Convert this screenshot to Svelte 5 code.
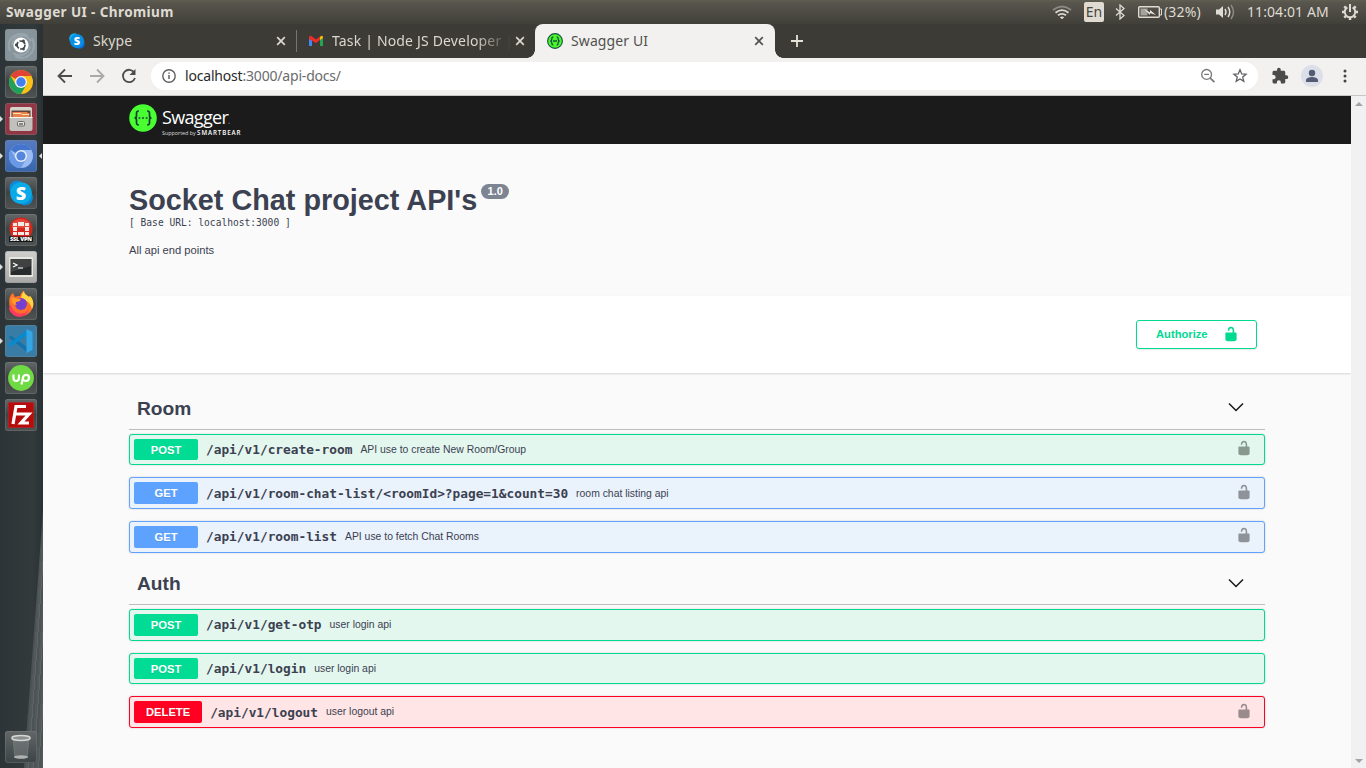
<script>
  const sections = [
    {
      name: 'Room',
      rows: [
        { method: 'POST', path: '/api/v1/create-room', text: 'API use to create New Room/Group', lock: true },
        { method: 'GET', path: '/api/v1/room-chat-list/<roomId>?page=1&count=30', text: 'room chat listing api', lock: true },
        { method: 'GET', path: '/api/v1/room-list', text: 'API use to fetch Chat Rooms', lock: true }
      ]
    },
    {
      name: 'Auth',
      rows: [
        { method: 'POST', path: '/api/v1/get-otp', text: 'user login api', lock: false },
        { method: 'POST', path: '/api/v1/login', text: 'user login api', lock: false },
        { method: 'DELETE', path: '/api/v1/logout', text: 'user logout api', lock: true }
      ]
    }
  ];
  const apps = ['dash', 'chrome', 'files', 'chromium', 'skype', 'vpn', 'terminal', 'firefox', 'code', 'upwork', 'filezilla', 'trash'];
  const running = ['files', 'chromium', 'terminal', 'code'];
</script>

{#snippet lock()}
  <svg class="lock" viewBox="0 0 20 20"><path d="M15.8 8H14V5.6C14 2.703 12.665 1 10 1 7.334 1 6 2.703 6 5.6V6h2v-.801C8 3.754 8.797 3 10 3c1.203 0 2 .754 2 2.199V8H4c-.553 0-1 .646-1 1.199V17c0 .549.428 1.139.951 1.307l1.197.387C5.672 18.861 6.55 19 7.1 19h5.8c.549 0 1.428-.139 1.951-.307l1.196-.387c.524-.167.953-.757.953-1.306V9.199C17 8.646 16.352 8 15.8 8z" /></svg>
{/snippet}

{#snippet close()}
  <svg class="close" viewBox="0 0 10 10" width="10" height="10"><path d="M1.2 1.2 8.8 8.8M8.8 1.2 1.2 8.8" fill="none" stroke="currentColor" stroke-width="1.7" /></svg>
{/snippet}

{#snippet icon(name)}
  <svg viewBox="0 0 32 32" width="32" height="32">
    {#if name === 'dash'}
      <path d="M5 22C0 9 13 1 23 7M10 27c12 6 23-5 17-18M7 16C8 6 20 3 26 12M25 17c-1 8-10 12-17 7" fill="none" stroke="#c5ced3" stroke-width="2" opacity=".3" />
      <circle cx="16" cy="16" r="7.6" fill="#fff" />
      <circle cx="16" cy="16" r="4" fill="none" stroke="#3e474c" stroke-width="1.7" stroke-dasharray="7 1.38" />
      <circle cx="11.3" cy="16" r="1.4" fill="#3e474c" /><circle cx="18.5" cy="11.9" r="1.4" fill="#3e474c" /><circle cx="18.5" cy="20.1" r="1.4" fill="#3e474c" />
    {:else if name === 'chrome'}
      <circle cx="16" cy="16" r="12" fill="#fbc116" />
      <path d="M16 16 5.6 10A12 12 0 0 1 26.4 10L16 10Z" fill="#df4436" />
      <path d="M5.6 10A12 12 0 0 0 16 28l5.2-9L16 16l-5.2 3Z" fill="#20a05a" />
      <circle cx="16" cy="16" r="6" fill="#f2f4f4" /><circle cx="16" cy="16" r="4.7" fill="#437ff0" />
    {:else if name === 'files'}
      <path d="M5 6q0-2 2-2h18q2 0 2 2v9H5Z" fill="#d6d2ca" /><path d="M6.5 7.5h19v6.5h-19Z" fill="#634239" />
      <path d="M7.5 9h15v1h2v4h-17Z" fill="#e9824a" /><path d="M8 10.5h8l1 1h7" stroke="#ffe0b6" fill="none" />
      <path d="M4.5 14h23v12q0 2-2 2h-19q-2 0-2-2Z" fill="#c1c0bc" /><path d="M4.5 14.5h23" stroke="#f6f4ef" />
      <rect x="12.5" y="18.5" width="7" height="4.5" rx="1" fill="#e2e1de" stroke="#6a6a66" /><path d="M14 21h4" stroke="#555" stroke-width="1.3" />
    {:else if name === 'chromium'}
      <circle cx="16" cy="16" r="12" fill="#9bbcf2" />
      <path d="M16 16 5.6 10A12 12 0 0 1 26.4 10L16 10Z" fill="#4375cd" />
      <path d="M5.6 10A12 12 0 0 0 16 28l5.2-9L16 16l-5.2 3Z" fill="#6998e7" />
      <circle cx="16" cy="16" r="6" fill="#e8effb" /><circle cx="16" cy="16" r="4.6" fill="#5686dc" />
    {:else if name === 'skype'}
      <circle cx="11.8" cy="11" r="7.5" fill="#1287d8" /><circle cx="20.3" cy="20.5" r="7.7" fill="#078cd8" /><circle cx="16" cy="16" r="10.8" fill="#0aa9e8" />
      <text x="16" y="22.5" text-anchor="middle" class="glyph" font-size="18" font-weight="800">S</text>
    {:else if name === 'vpn'}
      <circle cx="16" cy="15" r="11.5" fill="#d7261c" /><path d="M7 9q9-8 18 0v5H7Z" fill="#f06a56" opacity=".5" />
      <path d="M8 9h4v3H8Zm5-1h6v4h-6Zm7 1h4v3h-4ZM8 13h4v4H8Zm12 0h4v4h-4ZM8 18h4v3H8Zm5 0h6v3h-6Zm7 0h4v3h-4Z" fill="#f3e9e5" />
      <rect x="4" y="22.5" width="24" height="5.5" fill="#131415" /><text x="16" y="27.2" text-anchor="middle" class="glyph" font-size="5.7" font-weight="800" textLength="22">SSL VPN</text>
    {:else if name === 'terminal'}
      <rect x="4" y="6" width="24" height="20" rx="1" fill="#e6e6e3" /><rect x="5.5" y="8" width="21" height="16" fill="#282b2b" /><path d="M6 8h20v7L6 21Z" fill="#555958" opacity=".5" />
      <path d="m8 12 4 2-4 2M13 17h5" fill="none" stroke="#fff" stroke-width="1.2" />
    {:else if name === 'firefox'}
      <path d="M4.2 14C4 9 6 6 8 5l2 4q2-1 5-1 1-4 4-5c0 3 3 4 5 6l1-1c3 3 4 8 3 11-2 6-7 9-12 9C9 28 4 23 4.2 14Z" fill="#ff712a" />
      <path d="M19 3c0 3 3 4 5 6l1-1c4 4 4 9 2 13-2-8-6-8-11-11q1-5 3-7Z" fill="#ffd642" />
      <path d="M6 16c1 11 15 13 18 4-1 10-15 13-20 1Z" fill="#ff395f" />
      <circle cx="16" cy="16" r="6" fill="#773fd0" /><path d="M6 9q4 2 10 2-1 3-5 3-1 2 1 3-4 0-5-3Z" fill="#ff9b27" />
    {:else if name === 'code'}
      <path d="m4 12 2-1.5L22 22v5L4 13Z" fill="#1473aa" /><path d="m4 20 2 1.5L22 10V5L4 19Z" fill="#078bd0" />
      <path d="m21.5 4 6 3v18l-6 3Z" fill="#34a6e6" />
    {:else if name === 'upwork'}
      <circle cx="16" cy="16" r="12.9" fill="#6fda44" />
      <path d="M8.5 12.5V16q0 3 2.7 3t2.7-3v-3.5M16.5 22.5l1.5-7q.6-2.7 3.2-2.7 2.8 0 2.8 2.9T21.1 19q-2 0-3.3-1.7" fill="none" stroke="#fff" stroke-width="2.2" />
    {:else if name === 'filezilla'}
      <rect x="3.5" y="3.5" width="25" height="25" fill="#b80b0b" stroke="#c51f1f" stroke-dasharray="1 1" />
      <path d="M8 25 11 7.5h10M9.5 15H18M16 15h8l-8 9h8" fill="none" stroke="#fff" stroke-width="3.2" />
    {:else}
      <path d="m8 6 2 21h12l2-21Z" fill="#8b9292" opacity=".4" /><path d="m8 7 2 20M24 7l-2 20" stroke="#98a1a2" opacity=".35" />
      <ellipse cx="16" cy="7" rx="9.2" ry="2.5" fill="#8b908f" stroke="#d4d6d4" stroke-width="1.4" /><ellipse cx="16" cy="26" rx="7" ry="1.8" fill="#aeb2b0" />
    {/if}
  </svg>
{/snippet}

<div class="desktop">
  <header class="panel">
    <strong>Swagger UI - Chromium</strong>
    <div class="status">
      <svg class="wifi" viewBox="0 0 20 16" width="20" height="16" fill="none" stroke-width="1.8"><path d="M1 6q9-7 18 0" stroke="#8a8880" /><path d="M3.5 8.7q6.5-5 13 0M6 11.3q4-3 8 0" stroke="#dfdbd2" /><path d="m7.8 13.2 2.2 2 2.2-2q-2.2-1.4-4.4 0" fill="#dfdbd2" /></svg>
      <span class="lang">En</span>
      <svg class="bluetooth" viewBox="0 0 10 16" width="10" height="16"><path d="m1 4.5 8 7L5 15V1l4 3.5-8 7" fill="none" stroke="#dfdbd2" stroke-width="1.3" /></svg>
      <svg class="battery" viewBox="0 0 24 12" width="24" height="12"><rect x=".7" y=".7" width="20.6" height="10.6" rx="1" fill="none" stroke="#dfdbd2" stroke-width="1.4" /><rect x="2.5" y="2.5" width="7" height="7" fill="#a5a29a" /><path d="M22 3h1.5v6H22" fill="none" stroke="#dfdbd2" /><path d="m6 3 6 3.5V4l6 5-6-2v2Z" fill="#f0ede5" /></svg>
      <span class="percent">(32%)</span>
      <svg class="sound" viewBox="0 0 20 16" width="20" height="16"><path d="M1 5.5h3L8 2v12l-4-3.5H1Z" fill="#dfdbd2" /><path d="M10 5q2 3 0 6M13 3q3.5 5 0 10" fill="none" stroke="#dfdbd2" stroke-width="1.5" /><path d="M16 1q5 7 0 14" fill="none" stroke="#8c8a82" stroke-width="1.5" /></svg>
      <span class="clock">11:04:01 AM</span>
      <svg class="gear" viewBox="0 0 18 18" width="18" height="18" fill="none" stroke="#dfdbd2"><path d="M6.4 4.3a5.3 5.3 0 1 0 5.2 0" stroke-width="2" /><path d="M9 1v8" stroke-width="2" /><path d="M1 9h2M15 9h2M9 15v2M3.3 3.3l1.5 1.5M14.7 3.3l-1.5 1.5M3.3 14.7l1.5-1.5M14.7 14.7l-1.5-1.5" stroke-width="2.5" /></svg>
    </div>
  </header>
  <div class="workspace">
    <nav class="launcher">
      {#each apps as app}
        <div class="app {app}" class:running={running.includes(app)}>{@render icon(app)}</div>
      {/each}
    </nav>
    <div class="browser">
      <div class="tabs">
        <div class="tab skype-tab">
          <svg class="favicon" viewBox="0 0 16 16"><circle cx="5.5" cy="5.5" r="5.3" fill="#12b2f4" /><circle cx="10.5" cy="10.5" r="5.3" fill="#0769d5" /><circle cx="8" cy="8" r="7" fill="#078fe5" /><text x="8" y="12" text-anchor="middle" class="glyph" font-size="11" font-weight="800">S</text></svg>
          <span>Skype</span>{@render close()}
        </div>
        <div class="tab gmail-tab">
          <svg class="favicon" viewBox="0 0 16 16"><path d="M1 4v9h3V6Z" fill="#4285f4" /><path d="M12 6v7h3V4Z" fill="#22a652" /><path d="m12 4 1-1q2-1 2 2l-3 2Z" fill="#fbbc04" /><path d="M1 6V4q1-2 3-.5l4 3 4-3V7l-4 3Z" fill="#ea2d28" /></svg>
          <span class="fade">Task | Node JS Developer |</span>{@render close()}
        </div>
        <div class="tab active">
          <svg class="favicon" viewBox="0 0 16 16"><circle cx="8" cy="8" r="7.4" fill="#49f52b" stroke="#1c5144" stroke-width="1.1" /><path d="M6.3 4Q4.8 4 4.8 6T3.3 8q1.5 0 1.5 2t1.5 2M9.7 4q1.5 0 1.5 2t1.5 2q-1.5 0-1.5 2t-1.5 2M6 8h4" fill="none" stroke="#1c5144" stroke-width="1.3" /></svg>
          <span>Swagger UI</span>{@render close()}
        </div>
        <svg class="plus" viewBox="0 0 12 12" width="12" height="12"><path d="M6 0v12M0 6h12" stroke="#e6e4d8" stroke-width="1.8" /></svg>
      </div>
      <div class="toolbar">
        <svg class="back" viewBox="0 0 16 16" width="16" height="16"><path d="M15 8H2M8 1.5 1.5 8 8 14.5" /></svg>
        <svg class="forward" viewBox="0 0 16 16" width="16" height="16"><path d="M1 8h13M8 1.5 14.5 8 8 14.5" /></svg>
        <svg class="reload" viewBox="0 0 16 16" width="16" height="16"><path d="M13.3 4.5A6.2 6.2 0 1 0 14 10" /><path d="M14.5 1v6h-6Z" fill="#4c4c4a" stroke="none" /></svg>
        <div class="address">
          <svg class="info-icon" viewBox="0 0 16 16" width="16" height="16"><circle cx="8" cy="8" r="6.2" fill="none" stroke="#5f6062" stroke-width="1.4" /><path d="M8 7v4M8 4.4v1.4" stroke="#5f6062" stroke-width="1.5" /></svg>
          <span class="url"><b>localhost</b>:3000/api-docs/</span>
          <svg class="magnify" viewBox="0 0 16 16" width="16" height="16" fill="none" stroke="#777"><circle cx="6.6" cy="6.4" r="4.9" stroke-width="1.3" /><path d="m10 9.8 4.4 4.4" stroke-width="1.7" /><path d="M4.2 6.4H9" stroke-width="1.2" /></svg>
          <svg class="star" viewBox="0 0 16 16" width="16" height="16"><path d="m8 1.8 1.7 4.1 4.4.3-3.4 2.9 1.1 4.3L8 11l-3.8 2.4 1.1-4.3-3.4-2.9 4.4-.3Z" fill="none" stroke="#5f6062" stroke-width="1.3" /></svg>
        </div>
        <svg class="extension" viewBox="0 0 24 24" width="18" height="18"><path d="M20.5 11H19V7c0-1.1-.9-2-2-2h-4V3.5a2.5 2.5 0 0 0-5 0V5H4c-1.1 0-2 .9-2 2v3.8h1.5a2.7 2.7 0 0 1 0 5.4H2V20c0 1.1.9 2 2 2h3.8v-1.5a2.7 2.7 0 0 1 5.4 0V22H17c1.1 0 2-.9 2-2v-4h1.5a2.5 2.5 0 0 0 0-5Z" fill="#4b4b4a" /></svg>
        <svg class="avatar" viewBox="0 0 22 22" width="22" height="22"><circle cx="11" cy="11" r="11" fill="#dcdfe7" /><circle cx="11" cy="8" r="3.2" fill="#535b77" /><path d="M5 17v-1.8c0-2 3.5-3.2 6-3.2s6 1.2 6 3.2V17Z" fill="#535b77" /></svg>
        <svg class="menu" viewBox="0 0 4 14" width="4" height="14" fill="#444"><circle cx="2" cy="2" r="1.5" /><circle cx="2" cy="7" r="1.5" /><circle cx="2" cy="12" r="1.5" /></svg>
      </div>
      <div class="viewport">
        <main>
          <div class="brand">
            <svg viewBox="0 0 28 28" width="28" height="28"><circle cx="14" cy="14" r="13.8" fill="#49ff32" /><path d="M9.8 7.2Q7.5 7 7.5 9.2V12q0 2-2 2 2 0 2 2v2.8q0 2.2 2.3 2M18.2 7.2q2.3-.2 2.3 2V12q0 2 2 2-2 0-2 2v2.8q0 2.2-2.3 2" fill="none" stroke="#173b36" stroke-width="1.7" /><path d="M9.5 14h1.8m1.8 0h1.8m1.8 0h1.8" stroke="#173b36" stroke-width="1.7" /></svg>
            <div class="wordmark"><div class="brand-name">Swagger<i>.</i></div><div class="support">Supported by <b>SMARTBEAR</b></div></div>
          </div>
          <section class="info">
            <div class="title"><h1>Socket Chat project API's</h1><span>1.0</span></div>
            <pre>[ Base URL: localhost:3000 ]</pre>
            <p>All api end points</p>
          </section>
          <div class="authorization"><button><span>Authorize</span> {@render lock()}</button></div>
          <div class="operations">
            {#each sections as section}
              <section>
                <h2>{section.name}<svg viewBox="0 0 16 10" width="16" height="10"><path d="m1 1.5 7 7 7-7" fill="none" stroke="#171717" stroke-width="1.5" /></svg></h2>
                {#each section.rows as row}
                  <div class="operation {row.method.toLowerCase()}">
                    <span class="method">{row.method}</span><span class="path">{row.path}</span><span class="description">{row.text}</span>
                    {#if row.lock}{@render lock()}{/if}
                  </div>
                {/each}
              </section>
            {/each}
          </div>
        </main>
        <div class="scrollbar"><i class="up"></i><i class="down"></i></div>
      </div>
    </div>
  </div>
</div>

<style>
  :global(body) { margin: 0; overflow: hidden; }
  * { box-sizing: border-box; }
  svg { flex: none; display: block; }
  .desktop { width: 1366px; height: 768px; display: flex; flex-direction: column; font-family: "Noto Sans", sans-serif; }
  .panel { height: 24px; display: flex; align-items: center; justify-content: space-between; padding: 0 7px 0 6px; background: linear-gradient(#615e51 0, #59564e 2px, #403f39); color: #dfdbd2; font-size: 14px; }
  .panel strong { font-size: 13.5px; letter-spacing: .4px; white-space: nowrap; }
  .status { display: flex; align-items: center; height: 24px; }
  .lang { width: 20px; height: 20px; border-radius: 2px; background: #dfdbd2; color: #48463f; text-align: center; line-height: 20px; margin: 0 11px 0 12px; }
  .bluetooth { margin-right: 13px; }
  .percent { margin-left: 2px; width: 41px; font-size: 14px; line-height: 18px; padding-bottom: 1px; letter-spacing: .15px; white-space: nowrap; }
  .sound { margin: 0 12px 0 10px; }
  .clock { width: 85px; font-size: 14px; line-height: 18px; padding-bottom: 1px; letter-spacing: .08px; white-space: nowrap; }
  .gear { margin-left: 9px; }
  .workspace { display: flex; height: 744px; }
  .launcher { width: 43px; padding: 5px 6px 5px 5px; display: flex; flex-direction: column; gap: 5px; position: relative; background: linear-gradient(90deg, #2d3437, #323a3c 75%, #2a3134); }
  .launcher::before { content: ""; position: absolute; right: 0; bottom: 0; width: 19px; height: 258px; clip-path: polygon(100% 0, 100% 100%, 0 100%); background: repeating-linear-gradient(94deg, #53595b 0 2px, #5e6466 2px 3px, #4c5355 3px 5px); }
  .app { width: 32px; height: 32px; border-radius: 3px; flex: none; position: relative; background: linear-gradient(#646767, #3f4344 48%, #4f5353); box-shadow: inset 0 0 0 1px #858a8b55; }
  .app.dash { background: #87949b; }
  .app.files { background: #903644; }
  .app.chromium { background: linear-gradient(#567cc1, #3965ad); }
  .app.terminal { background: linear-gradient(#cfcfcd, #a8a9a7); }
  .app.code { background: #397da7; }
  .app.trash { margin-top: auto; background: linear-gradient(#626667, #3c4445); }
  .running::before, .chromium::after { content: ""; position: absolute; top: 13px; border: 3px solid transparent; }
  .running::before { left: -5px; border-left-color: #ddd; border-right: 0; }
  .chromium::after { right: -5px; border-right-color: #ddd; border-left: 0; }
  .glyph { fill: #fff; font-family: "Open Sans", sans-serif; }
  .browser { flex: 1; min-width: 0; display: flex; flex-direction: column; }
  .tabs { height: 34px; background: #3c3b36; display: flex; align-items: stretch; color: #dbd8ce; font-size: 14px; }
  .tab { display: flex; align-items: center; width: 239px; }
  .tab span { margin-left: 8px; white-space: nowrap; padding-bottom: 2px; letter-spacing: .1px; }
  .tab .close { margin-left: auto; }
  .favicon { width: 16px; height: 16px; }
  .skype-tab { padding: 0 10px 0 26px; width: 254px; border-right: 1px solid #696860; border-image: linear-gradient(transparent 20%, #77756c 20% 80%, transparent 80%) 1; }
  .gmail-tab { padding: 0 10px 0 11px; width: 238px; }
  .gmail-tab .fade { width: 178px; margin-right: -6px; letter-spacing: .17px; mask-image: linear-gradient(90deg, #000 80%, #0001 99%); }
  .active { width: 240px; background: #f2f1f0; padding: 0 11px 0 12px; border-radius: 8px 8px 0 0; color: #51514e; position: relative; }
  .active::before, .active::after { content: ""; position: absolute; bottom: 0; width: 8px; height: 8px; }
  .active::before { left: -8px; background: radial-gradient(circle at 0 0, transparent 7.5px, #f2f1f0 8px); }
  .active::after { right: -8px; background: radial-gradient(circle at 100% 0, transparent 7.5px, #f2f1f0 8px); }
  .plus { align-self: center; margin-left: 16px; }
  .toolbar { height: 38px; border-bottom: 1px solid #c7c7c5; background: #f2f1f0; display: flex; align-items: center; padding: 0 19.5px 1px 14px; }
  .toolbar > .back, .forward, .reload { fill: none; stroke: #4c4c4a; stroke-width: 1.8; }
  .toolbar > .forward { stroke: #aaa9a7; }
  .forward, .reload { margin-left: 16px; }
  .address { width: 1107px; height: 28px; border-radius: 14px; background: #fff; margin-left: 14px; display: flex; align-items: center; padding: 0 10px; color: #6a6b6d; font-size: 14px; }
  .url { margin-left: 8px; letter-spacing: -.19px; white-space: nowrap; padding-bottom: 1px; }
  .url b { font-weight: 400; color: #29292a; }
  .magnify { margin-left: auto; }
  .star { margin-left: 16px; }
  .extension { margin-left: 13px; }
  .avatar { margin-left: 12px; }
  .menu { margin-left: auto; }
  .viewport { flex: 1; display: flex; min-height: 0; font-family: "Liberation Sans", Arial, sans-serif; color: #3b4151; }
  main { flex: 1; background: #fafafa; }
  .brand { height: 48px; background: #1b1b1b; padding: 8px 86px; display: flex; color: #fff; gap: 5px; }
  .wordmark { font-family: "Open Sans", sans-serif; white-space: nowrap; }
  .brand-name { font-size: 18px; line-height: 27px; letter-spacing: -.65px; height: 24px; }
  .brand-name i { color: #777; font-size: 10px; }
  .support { font-size: 5.4px; line-height: 9px; letter-spacing: -.02px; color: #ddd; }
  .support b { font-size: 6.2px; font-weight: 600; letter-spacing: .9px; color: #fff; }
  .info { height: 152px; padding: 40px 86px 0; }
  .title { display: flex; align-items: flex-start; }
  h1 { font-size: 28.8px; line-height: 33px; margin: 0; white-space: nowrap; }
  .title span { margin: 0 0 0 4px; width: 28px; height: 15px; line-height: 15px; border-radius: 8px; background: #7d8492; color: #fff; font-size: 11px; font-weight: 700; text-align: center; }
  pre { font: 9.6px/12px "DejaVu Sans Mono", monospace; margin: 0; }
  .info p { font-size: 11.2px; line-height: 14px; margin: 14px 0 0; }
  .authorization { height: 77px; background: #fff; display: flex; justify-content: flex-end; padding: 24px 94px 0 0; box-shadow: 0 1px 2px #00000026; }
  button { width: 121px; height: 29px; border: 1px solid #00d992; border-radius: 3px; background: #fff; color: #00d992; display: flex; align-items: center; justify-content: space-between; padding: 0 17px 0 19px; font: 700 11.2px "Liberation Sans", sans-serif; box-shadow: 0 1px 2px #0000001a; }
  button span { padding-bottom: 2px; }
  button .lock { margin-top: -1px; }
  .lock { width: 16px; height: 16px; fill: currentColor; }
  .operations { padding: 16.6px 86px 0; }
  section + section { padding-top: .2px; }
  h2 { height: 40.2px; margin: 0 0 4px; border-bottom: 1px solid #bcbdc1; display: flex; align-items: center; justify-content: space-between; padding: 0 21px 0 8px; font-size: 19.2px; line-height: 22px; }
  h2 svg { margin-top: -3.4px; }
  .operation { height: 31.6px; border: 1px solid #00d992; background: #e4f7ee; border-radius: 3px; margin-bottom: 12px; padding: 4px 12px 4px 4px; display: flex; align-items: center; box-shadow: 0 0 2px #0003; white-space: nowrap; }
  .method { min-width: 64px; height: 21.6px; border-radius: 2px; background: #00dc94; color: #fff; font-size: 11.2px; line-height: 22px; font-weight: 700; text-align: center; text-shadow: 0 1px 0 #0000001a; padding: 0 12px; }
  .path { font: 700 12.8px/18px "DejaVu Sans Mono", monospace; margin: 1.3px 0 0 8px; }
  .description { font-size: 10.4px; line-height: 14px; margin: .9px 0 0 8px; }
  .operation .lock { margin-left: auto; margin-top: -2.6px; color: #889990; }
  .operation.get { border-color: #61a2ff; background: #eaf2fc; }
  .get .method { background: #5da2ff; }
  .operation.get .lock { color: #8e9399; }
  .operation.delete { border-color: #f02; background: #ffe5e5; }
  .delete .method { background: #ff0022; }
  .operation.delete .lock { color: #998b8c; }
  .scrollbar { width: 15px; background: #f1f1f1; display: flex; flex-direction: column; justify-content: space-between; align-items: center; padding: 6px 0 5px; }
  .scrollbar i { border: 4px solid transparent; }
  .up { border-top: 0 !important; border-bottom-color: #a3a3a3 !important; }
  .down { border-bottom: 0 !important; border-top-color: #a3a3a3 !important; }
</style>
